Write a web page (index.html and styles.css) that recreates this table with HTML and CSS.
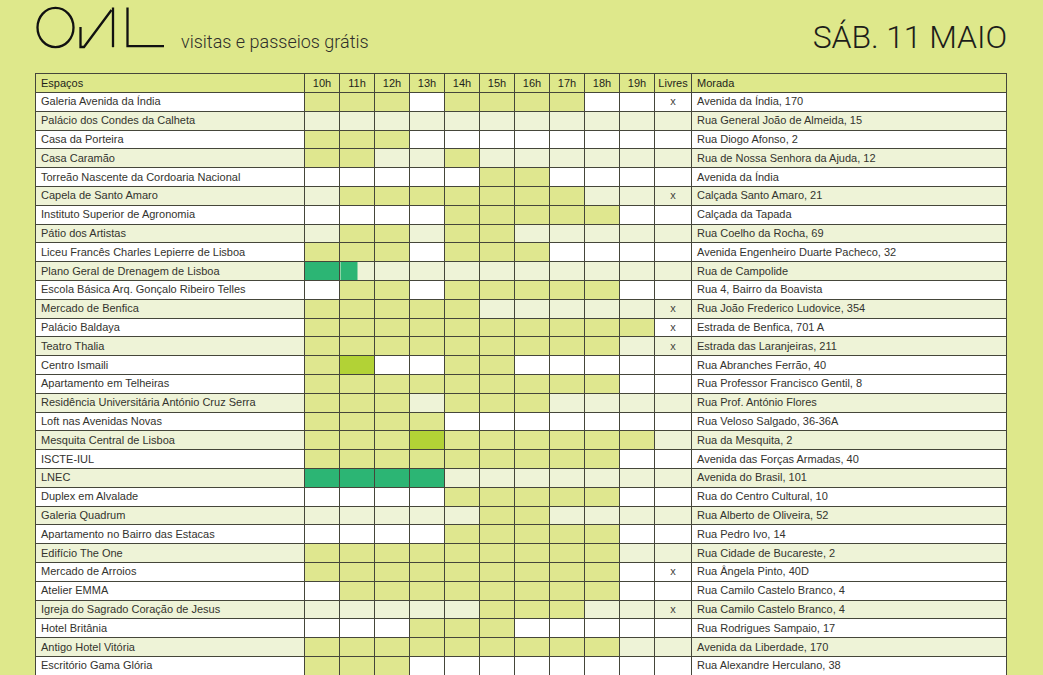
FILE: index.html
```html
<!DOCTYPE html>
<html lang="pt">
<head>
<meta charset="utf-8">
<title>OHL — Sáb. 11 Maio</title>
<link rel="stylesheet" href="styles.css">
</head>
<body>
<header class="top">
  <svg class="logo" viewBox="30 0 140 52" aria-label="OHL">
    <g fill="none" stroke="#111" stroke-width="2.3" stroke-linejoin="miter">
      <ellipse cx="55.5" cy="27.5" rx="18" ry="19.6"/>
      <path d="M80.5 27 V47 H84 L111.5 10"/>
      <path d="M113 7.5 V47.2"/>
      <path d="M127.5 7.5 V46.1 H164"/>
    </g>
  </svg>
  <span class="tagline">visitas e passeios grátis</span>
  <span class="date">SÁB. 11 MAIO</span>
</header>
<table class="schedule">
  <colgroup>
    <col class="c-name"><col class="c-h"><col class="c-h"><col class="c-h"><col class="c-h"><col class="c-h"><col class="c-h"><col class="c-h"><col class="c-h"><col class="c-h"><col class="c-h"><col class="c-free"><col class="c-addr">
  </colgroup>
  <thead>
    <tr><th class="name">Espaços</th><th>10h</th><th>11h</th><th>12h</th><th>13h</th><th>14h</th><th>15h</th><th>16h</th><th>17h</th><th>18h</th><th>19h</th><th>Livres</th><th class="addr">Morada</th></tr>
  </thead>
  <tbody>
    <tr><td class="name">Galeria Avenida da Índia</td><td class="y"></td><td class="y"></td><td class="y"></td><td></td><td class="y"></td><td class="y"></td><td class="y"></td><td class="y"></td><td></td><td></td><td class="free">x</td><td class="addr">Avenida da Índia, 170</td></tr>
    <tr class="alt"><td class="name">Palácio dos Condes da Calheta</td><td></td><td></td><td></td><td></td><td></td><td></td><td></td><td></td><td></td><td></td><td class="free"></td><td class="addr">Rua General João de Almeida, 15</td></tr>
    <tr><td class="name">Casa da Porteira</td><td class="y"></td><td class="y"></td><td class="y"></td><td></td><td></td><td></td><td></td><td></td><td></td><td></td><td class="free"></td><td class="addr">Rua Diogo Afonso, 2</td></tr>
    <tr class="alt"><td class="name">Casa Caramão</td><td class="y"></td><td class="y"></td><td></td><td></td><td class="y"></td><td></td><td></td><td></td><td></td><td></td><td class="free"></td><td class="addr">Rua de Nossa Senhora da Ajuda, 12</td></tr>
    <tr><td class="name">Torreão Nascente da Cordoaria Nacional</td><td></td><td></td><td></td><td></td><td></td><td class="y"></td><td class="y"></td><td></td><td></td><td></td><td class="free"></td><td class="addr">Avenida da Índia</td></tr>
    <tr class="alt"><td class="name">Capela de Santo Amaro</td><td></td><td class="y"></td><td class="y"></td><td class="y"></td><td class="y"></td><td class="y"></td><td class="y"></td><td class="y"></td><td></td><td></td><td class="free">x</td><td class="addr">Calçada Santo Amaro, 21</td></tr>
    <tr><td class="name">Instituto Superior de Agronomia</td><td></td><td></td><td></td><td></td><td class="y"></td><td class="y"></td><td class="y"></td><td class="y"></td><td class="y"></td><td></td><td class="free"></td><td class="addr">Calçada da Tapada</td></tr>
    <tr class="alt"><td class="name">Pátio dos Artistas</td><td></td><td class="y"></td><td class="y"></td><td></td><td class="y"></td><td class="y"></td><td></td><td></td><td></td><td></td><td class="free"></td><td class="addr">Rua Coelho da Rocha, 69</td></tr>
    <tr><td class="name">Liceu Francês Charles Lepierre de Lisboa</td><td class="y"></td><td class="y"></td><td class="y"></td><td></td><td class="y"></td><td class="y"></td><td class="y"></td><td></td><td></td><td></td><td class="free"></td><td class="addr">Avenida Engenheiro Duarte Pacheco, 32</td></tr>
    <tr class="alt"><td class="name">Plano Geral de Drenagem de Lisboa</td><td class="g"></td><td class="hg"></td><td></td><td></td><td></td><td></td><td></td><td></td><td></td><td></td><td class="free"></td><td class="addr">Rua de Campolide</td></tr>
    <tr><td class="name">Escola Básica Arq. Gonçalo Ribeiro Telles</td><td></td><td class="y"></td><td class="y"></td><td></td><td class="y"></td><td class="y"></td><td class="y"></td><td class="y"></td><td class="y"></td><td></td><td class="free"></td><td class="addr">Rua 4, Bairro da Boavista</td></tr>
    <tr class="alt"><td class="name">Mercado de Benfica</td><td class="y"></td><td class="y"></td><td class="y"></td><td class="y"></td><td class="y"></td><td></td><td></td><td></td><td></td><td></td><td class="free">x</td><td class="addr">Rua João Frederico Ludovice, 354</td></tr>
    <tr><td class="name">Palácio Baldaya</td><td class="y"></td><td class="y"></td><td class="y"></td><td class="y"></td><td class="y"></td><td class="y"></td><td class="y"></td><td class="y"></td><td class="y"></td><td class="y"></td><td class="free">x</td><td class="addr">Estrada de Benfica, 701 A</td></tr>
    <tr class="alt"><td class="name">Teatro Thalia</td><td class="y"></td><td class="y"></td><td class="y"></td><td class="y"></td><td class="y"></td><td class="y"></td><td class="y"></td><td class="y"></td><td class="y"></td><td></td><td class="free">x</td><td class="addr">Estrada das Laranjeiras, 211</td></tr>
    <tr><td class="name">Centro Ismaili</td><td class="y"></td><td class="b"></td><td></td><td></td><td class="y"></td><td class="y"></td><td></td><td></td><td></td><td></td><td class="free"></td><td class="addr">Rua Abranches Ferrão, 40</td></tr>
    <tr><td class="name">Apartamento em Telheiras</td><td class="y"></td><td class="y"></td><td class="y"></td><td class="y"></td><td class="y"></td><td class="y"></td><td class="y"></td><td class="y"></td><td class="y"></td><td></td><td class="free"></td><td class="addr">Rua Professor Francisco Gentil, 8</td></tr>
    <tr class="alt"><td class="name">Residência Universitária António Cruz Serra</td><td class="y"></td><td class="y"></td><td class="y"></td><td></td><td class="y"></td><td class="y"></td><td class="y"></td><td></td><td></td><td></td><td class="free"></td><td class="addr">Rua Prof. António Flores</td></tr>
    <tr><td class="name">Loft nas Avenidas Novas</td><td class="y"></td><td class="y"></td><td class="y"></td><td class="y"></td><td></td><td></td><td></td><td></td><td></td><td></td><td class="free"></td><td class="addr">Rua Veloso Salgado, 36-36A</td></tr>
    <tr class="alt"><td class="name">Mesquita Central de Lisboa</td><td class="y"></td><td class="y"></td><td class="y"></td><td class="b"></td><td class="y"></td><td class="y"></td><td class="y"></td><td class="y"></td><td class="y"></td><td class="y"></td><td class="free"></td><td class="addr">Rua da Mesquita, 2</td></tr>
    <tr><td class="name">ISCTE-IUL</td><td class="y"></td><td class="y"></td><td class="y"></td><td class="y"></td><td class="y"></td><td class="y"></td><td class="y"></td><td class="y"></td><td class="y"></td><td></td><td class="free"></td><td class="addr">Avenida das Forças Armadas, 40</td></tr>
    <tr class="alt"><td class="name">LNEC</td><td class="g"></td><td class="g"></td><td class="g"></td><td class="g"></td><td></td><td></td><td></td><td></td><td></td><td></td><td class="free"></td><td class="addr">Avenida do Brasil, 101</td></tr>
    <tr><td class="name">Duplex em Alvalade</td><td></td><td></td><td></td><td></td><td class="y"></td><td class="y"></td><td class="y"></td><td class="y"></td><td class="y"></td><td></td><td class="free"></td><td class="addr">Rua do Centro Cultural, 10</td></tr>
    <tr class="alt"><td class="name">Galeria Quadrum</td><td></td><td></td><td></td><td></td><td></td><td class="y"></td><td class="y"></td><td></td><td></td><td></td><td class="free"></td><td class="addr">Rua Alberto de Oliveira, 52</td></tr>
    <tr><td class="name">Apartamento no Bairro das Estacas</td><td></td><td></td><td></td><td></td><td class="y"></td><td class="y"></td><td class="y"></td><td class="y"></td><td class="y"></td><td></td><td class="free"></td><td class="addr">Rua Pedro Ivo, 14</td></tr>
    <tr class="alt"><td class="name">Edifício The One</td><td class="y"></td><td class="y"></td><td class="y"></td><td class="y"></td><td class="y"></td><td class="y"></td><td class="y"></td><td class="y"></td><td class="y"></td><td></td><td class="free"></td><td class="addr">Rua Cidade de Bucareste, 2</td></tr>
    <tr><td class="name">Mercado de Arroios</td><td class="y"></td><td class="y"></td><td class="y"></td><td class="y"></td><td class="y"></td><td class="y"></td><td class="y"></td><td class="y"></td><td class="y"></td><td></td><td class="free">x</td><td class="addr">Rua Ângela Pinto, 40D</td></tr>
    <tr><td class="name">Atelier EMMA</td><td></td><td class="y"></td><td class="y"></td><td class="y"></td><td class="y"></td><td class="y"></td><td class="y"></td><td class="y"></td><td class="y"></td><td></td><td class="free"></td><td class="addr">Rua Camilo Castelo Branco, 4</td></tr>
    <tr class="alt"><td class="name">Igreja do Sagrado Coração de Jesus</td><td></td><td></td><td></td><td></td><td></td><td class="y"></td><td class="y"></td><td class="y"></td><td></td><td></td><td class="free">x</td><td class="addr">Rua Camilo Castelo Branco, 4</td></tr>
    <tr><td class="name">Hotel Britânia</td><td></td><td></td><td></td><td class="y"></td><td class="y"></td><td class="y"></td><td></td><td></td><td></td><td></td><td class="free"></td><td class="addr">Rua Rodrigues Sampaio, 17</td></tr>
    <tr class="alt"><td class="name">Antigo Hotel Vitória</td><td class="y"></td><td class="y"></td><td class="y"></td><td class="y"></td><td class="y"></td><td class="y"></td><td class="y"></td><td class="y"></td><td class="y"></td><td></td><td class="free"></td><td class="addr">Avenida da Liberdade, 170</td></tr>
    <tr><td class="name">Escritório Gama Glória</td><td class="y"></td><td class="y"></td><td class="y"></td><td></td><td></td><td></td><td></td><td></td><td></td><td></td><td class="free"></td><td class="addr">Rua Alexandre Herculano, 38</td></tr>
  </tbody>
</table>
</body>
</html>
```

FILE: styles.css
```css
html, body {
  margin: 0;
  background: #dee88b;
}
body {
  width: 1043px;
  height: 675px;
  overflow: hidden;
  font-family: "Liberation Sans", Arial, sans-serif;
  color: #33332e;
}
.top {
  display: flex;
  align-items: flex-end;
  height: 52px;
  padding: 0 36px 0 30px;
  margin-bottom: 21px;
}
.logo {
  display: block;
  flex: none;
  width: 140px;
  height: 52px;
}
.tagline {
  margin-left: 11px;
  margin-bottom: 1px;
  font-family: Roboto, "Liberation Sans", Arial, sans-serif;
  font-weight: 300;
  font-size: 18px;
  line-height: 1;
  color: #2f2f2a;
}
.date {
  margin-left: auto;
  margin-bottom: -1px;
  font-family: Roboto, "Liberation Sans", Arial, sans-serif;
  font-weight: 300;
  font-size: 32px;
  line-height: 1;
  letter-spacing: -0.1px;
  color: #1d1d1a;
}
.schedule {
  margin-left: 35px;
  width: 972px;
  border-collapse: collapse;
  table-layout: fixed;
  font-size: 11px;
}
.c-name { width: 269px; }
.c-h { width: 35px; }
.c-free { width: 37px; }
.c-addr { width: 315px; }
.schedule th,
.schedule td {
  border: 1px solid #45463a;
  height: 17.8px;
  padding: 0;
  text-align: center;
  white-space: nowrap;
  overflow: hidden;
  line-height: 1;
}
.schedule th {
  background: #dee88b;
  font-weight: normal;
  color: #1f1f1b;
  height: 18px;
}
.schedule td { background: #ffffff; }
.schedule .alt td { background: #eef3d7; }
.schedule td.y { background: #dfe78f; }
.schedule td.g { background: #2cb574; }
.schedule td.b { background: #b2d236; }
.schedule td.hg { background: linear-gradient(90deg, #2cb574 50%, #eef3d7 50%); }
.schedule .name,
.schedule .addr {
  text-align: left;
  padding-left: 5px;
}
.schedule .free {
  color: #44443c;
}
```
